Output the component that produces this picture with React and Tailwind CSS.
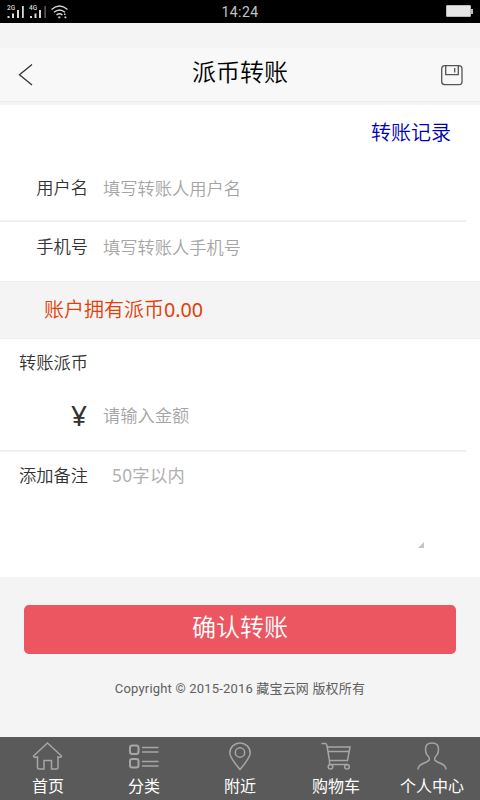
import React, { useState } from "react";

function StatusBar() {
  return (
    <div className="h-[23px] bg-black flex items-center justify-between pl-[7px] pr-[7px] pb-px shrink-0">
      <svg width="64" height="18" viewBox="0 0 64 18" fill="#d8d8d8">
        <text x="0" y="8" fontSize="6.5" fontWeight="500">2G</text>
        <path d="M0.500 14h2v2h-2zM5 11.500h2v4.500H5zM10 8h2v8h-2zM15 4h1.800v12H15z" />
        <text x="22" y="8" fontSize="6.5" fontWeight="500">4G</text>
        <path d="M23 14h2v2h-2zM27.500 11.500h2v4.500h-2zM32 8h2v8h-2z" />
        <path fill="#777" d="M37.500 4h1.200v12h-1.200z" />
        <g fill="none" stroke="#d8d8d8" strokeWidth="1.400">
          <path d="M44.500 7.500q8-7 16 0M47 10.300q5.500-4.800 11 0M49.500 13q3-2.500 6 0" />
        </g>
        <path d="M51.300 14.500h2v1.800h-2zM57 11.500h1.500v1.500h-1.500zM57.500 14.500h1.800v1.800h-1.800z" />
      </svg>
      <span className="text-[14px] leading-none font-normal tracking-[0.400px] text-[#c4c4c4] pt-[2px]">14:24</span>
      <span className="w-[64px] flex items-center justify-end">
        <span className="w-[25px] h-[12px] bg-[#e6e6e6] border border-[#bcbcbc] rounded-[1px]" />
        <span className="w-[2px] h-[5px] bg-[#bcbcbc]" />
      </span>
    </div>
  );
}

function Header() {
  return (
    <div className="h-[54px] bg-[#f8f8f8] border-b border-[#ebebeb] flex items-center justify-between pl-[18px] pr-[17px] shrink-0">
      <svg width="24" height="24" viewBox="0 0 24 24" fill="none" stroke="#333" strokeWidth="1.300">
        <path d="M14 1.500L1.500 11.800L14 22" />
      </svg>
      <h1 className="text-[24px] leading-[24px] font-[350] text-black pr-px pb-[4px]">派币转账</h1>
      <svg width="24" height="24" viewBox="0 0 24 24" fill="none" stroke="#555" strokeWidth="1.300">
        <rect x="2.700" y="2.700" width="20.300" height="19" rx="3.200" />
        <path d="M6.700 2.700v9h12.600v-9M15.700 5v4.500" />
      </svg>
    </div>
  );
}

function Field({ label, placeholder }) {
  const [value, setValue] = useState("");

  return (
    <>
      <label className="w-[88px] text-right text-[17.25px] leading-[24px] text-[#333]">{label}</label>
      <input
        type="text"
        value={value}
        placeholder={placeholder}
        className="ml-[15px] mt-[2px] w-[340px] h-[24px] bg-transparent text-[17.25px] outline-none placeholder:text-[#a5a5a5]"
        onChange={(e) => setValue(e.target.value)}
      />
    </>
  );
}

const TABS = [
  {
    name: "首页",
    icon: <path d="M1.500 15L15.500 2L29.500 15Q29.500 17 26 16V26.500Q26 28 24.500 28H19.500V19.500H12V28H7Q5.500 28 5.500 26.500V16Q1.500 17 1.500 15Z" />,
  },
  {
    name: "分类",
    icon: (
      <>
        <rect x="2" y="4.500" width="8.500" height="8.500" rx="2.200" strokeWidth="2" />
        <rect x="2" y="18" width="8.500" height="8.500" rx="2.200" strokeWidth="2" />
        <path d="M14 6.500H30.500M14 11H30.500M14 20.500H30.500M14 25H30.500" strokeWidth="1.600" />
      </>
    ),
  },
  {
    name: "附近",
    icon: (
      <>
        <path d="M16 28.500C12 23.500 5.800 17 5.800 11.800A10.200 9.800 0 0 1 26.200 11.800C26.200 17 20 23.500 16 28.500Z" />
        <circle cx="16" cy="11.500" r="4.700" />
      </>
    ),
  },
  {
    name: "购物车",
    icon: (
      <>
        <path d="M1.500 2.500H5.500Q6.500 2.500 7 5L9.500 19.500V23.500H28M7 6H30L27.500 19.500H9M7.700 10.500H29" />
        <circle cx="10.500" cy="25.700" r="2.300" />
        <circle cx="27" cy="25.700" r="2.300" />
      </>
    ),
  },
  {
    name: "个人中心",
    icon: (
      <path d="M2 28.500C2 24 6 23 9.500 21.500C14 19.500 14 18.500 12.500 15.500C9.500 13 9.500 10 9.500 8C9.500 4 12 2 16 2S22.500 4 22.500 8C22.500 10 22.500 13 19.500 15.500C18 18.500 18 19.500 22.500 21.500C26 23 30 24 30 28.500" />
    ),
  },
];

function TabBar() {
  return (
    <div className="h-[63px] bg-[#5a5a5a] grid grid-cols-5 shrink-0">
      {TABS.map((tab, index) => (
        <div key={index} className="flex flex-col items-center pt-[4px]">
          <svg width="32" height="30" viewBox="0 0 32 30" fill="none" stroke="#a6a6a6" strokeWidth="1.500">
            {tab.icon}
          </svg>
          <span className="text-[16px] leading-[20px] mt-[6px] font-normal text-white whitespace-nowrap">{tab.name}</span>
        </div>
      ))}
    </div>
  );
}

function App() {
  return (
    <div className="w-[480px] h-[800px] bg-[#f4f4f4] flex flex-col overflow-hidden font-[350] font-[Roboto,'Noto_Sans_CJK_SC',sans-serif]">
      <StatusBar />
      <div className="h-[25px] shrink-0" />
      <Header />

      <div className="mt-[3px] bg-white shrink-0">
        <div className="h-[57px] pt-[16px] pr-[29px] text-right">
          <a href="#" className="text-[20px] leading-[24px] text-[#0000b4]">转账记录</a>
        </div>
        <div className="w-[466px] h-[60px] pt-[14px] flex items-start border-b-2 border-[#f0f0f0]">
          <Field label="用户名" placeholder="填写转账人用户名" />
        </div>
        <div className="w-[466px] h-[59px] pt-[13px] flex items-start">
          <Field label="手机号" placeholder="填写转账人手机号" />
        </div>
      </div>

      {/* Balance */}
      <div className="h-[58px] border-y border-[#eeeeee] pl-[44px] pt-[16px] text-[20px] leading-[24px] text-[#e04008] shrink-0">
        账户拥有派币<span className="font-['Noto_Sans'] font-normal text-[19.700px]">0.00</span>
      </div>

      {/* Amount and remark */}
      <div className="h-[238px] bg-white shrink-0">
        <div className="w-[466px] h-[113px] border-b-2 border-[#f0f0f0]">
          <div className="h-[62px] pl-[19px] pt-[12px] text-[17.25px] leading-[24px] text-[#333]">转账派币</div>
          <div className="flex items-start">
            <span className="w-[87px] text-right text-[28px] leading-[28px] font-normal font-['Noto_Sans'] text-[#333]">¥</span>
            <input
              type="text"
              placeholder="请输入金额"
              className="ml-[16px] mt-px w-[340px] h-[28px] bg-transparent text-[17.25px] outline-none placeholder:text-[#a5a5a5]"
            />
          </div>
        </div>
        <div className="flex items-start pl-[19px] pt-[12px]">
          <label className="w-[69px] text-[17.25px] leading-[24px] text-[#333] whitespace-nowrap">添加备注</label>
          <textarea
            placeholder="50字以内"
            className="ml-[24px] w-[312px] h-[84px] resize-none bg-transparent font-normal font-['Noto_Sans','Noto_Sans_CJK_SC',sans-serif] text-[17.25px] leading-[24px] tracking-[0.300px] outline-none placeholder:text-[#b0b0b0]"
          />
          <svg width="6" height="6" viewBox="0 0 6 6" className="mt-[78px] -ml-[6px]" fill="#c4c4c4">
            <path d="M6 0V6H0Z" />
          </svg>
        </div>
      </div>

      <button className="mt-[28px] mx-[24px] h-[49px] pb-[3px] rounded-[5px] bg-[#eb5661] text-[24px] leading-[24px] text-white shrink-0">
        确认转账
      </button>
      <p className="mt-[25px] text-center text-[13px] leading-[20px] tracking-[0.180px] font-normal text-[#606060]">
        Copyright © 2015-2016 藏宝云网 版权所有
      </p>

      <div className="grow" />
      <TabBar />
    </div>
  );
}

export default App;
